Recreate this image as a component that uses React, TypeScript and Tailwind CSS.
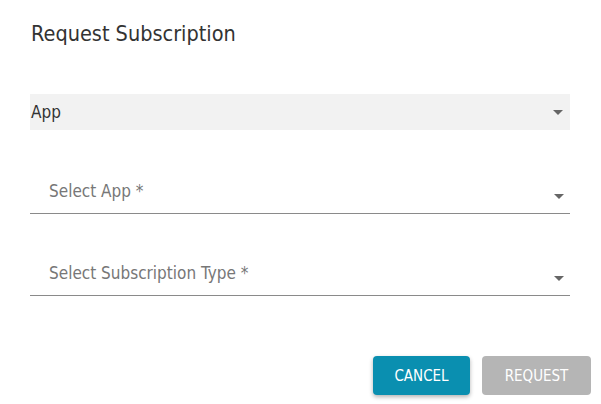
import React from 'react';

const Caret = () => (
  <svg width="10" height="5" viewBox="0 0 10 5" className="text-[#666]">
    <path d="M0 0h10L5 5z" fill="currentColor" />
  </svg>
);

const UnderlineSelect = ({ label }: { label: string }) => (
  <div className="flex items-end justify-between border-b border-[#8a8a8a] h-[53px] pb-[12px] pl-[19px] pr-[6px]">
    <span className="text-[17px] leading-[20px] text-[#777]">{label}</span>
    <span className="mb-[2px]"><Caret /></span>
  </div>
);

export default function App() {
  return (
    <div
      className="w-[601px] h-[404px] bg-white relative"
      style={{ fontFamily: '"DejaVu Sans Condensed", "Open Sans", sans-serif' }}
    >
      <div className="pl-[30px] pr-[31px] pt-[22px]">
        <h2 className="text-[21.5px] leading-[24px] text-[#333] pl-[1px]">Request Subscription</h2>

        <div className="mt-[48px] h-[36px] bg-[#f2f2f2] flex items-center justify-between pl-[1px] pr-[7px]">
          <span className="text-[17px] text-[#333] pt-[2px]">App</span>
          <Caret />
        </div>

        <div className="mt-[31px]">
          <UnderlineSelect label="Select App *" />
        </div>
        <div className="mt-[29px]">
          <UnderlineSelect label="Select Subscription Type *" />
        </div>
      </div>

      <div className="absolute right-[10px] bottom-[9px] flex gap-[12px]">
        <button className="w-[97px] h-[39px] rounded-[4px] bg-[#0a8fb0] text-white text-[15px] pt-[2px] shadow-[0_2px_4px_rgba(0,0,0,0.3)]">
          CANCEL
        </button>
        <button className="w-[109px] h-[39px] rounded-[4px] bg-[#b5b5b5] text-white text-[15px] pt-[2px]">
          REQUEST
        </button>
      </div>
    </div>
  );
}
